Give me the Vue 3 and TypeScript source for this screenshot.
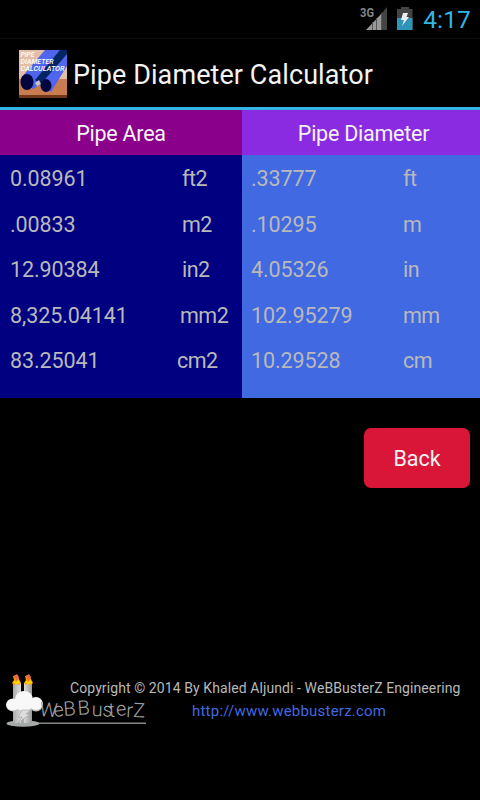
<script setup lang="ts">
interface Row {
  value: string
  unit: string
  shift?: string
}

const areas: Row[] = [
  { value: '0.08961', unit: 'ft2' },
  { value: '.00833', unit: 'm2' },
  { value: '12.90384', unit: 'in2' },
  { value: '8,325.04141', unit: 'mm2', shift: 'wide' },
  { value: '83.25041', unit: 'cm2', shift: 'wider' },
]

const diameters: Row[] = [
  { value: '.33777', unit: 'ft' },
  { value: '.10295', unit: 'm' },
  { value: '4.05326', unit: 'in' },
  { value: '102.95279', unit: 'mm' },
  { value: '10.29528', unit: 'cm' },
]

function goBack() {
  window.history.back()
}
</script>

<template>
  <div class="screen">
    <!-- status bar -->
    <div class="status-bar">
      <svg class="signal" width="28" height="26" viewBox="0 0 28 26">
        <text x="0" y="12" class="network" textLength="14" lengthAdjust="spacingAndGlyphs">3G</text>
        <path d="M22 8L27 2V25H22Z" fill="#444" />
        <path d="M6 25L22 8V25Z" fill="#999" />
        <path d="M12.500 17V25M16.500 13V25M21.500 8V25" stroke="#555" stroke-width="1" />
      </svg>
      <svg class="battery" width="16" height="24" viewBox="0 0 16 24">
        <path d="M4 0H12V2H15.500V23H0V2H4Z" fill="#444" />
        <path d="M0 11H15.500V23H0Z" fill="#2e94b8" />
        <path d="M6 6H11L9.500 10H12L5 19L7 13H4Z" fill="#eee" />
      </svg>
      <span class="clock">4:17</span>
    </div>

    <!-- title bar -->
    <header class="action-bar">
      <svg class="app-icon" width="48" height="48" viewBox="0 0 48 48">
        <rect width="48" height="48" fill="#e4bda5" />
        <path d="M0 29H48V48H0Z" fill="#c87c50" />
        <path d="M0 45H48V48H0Z" fill="#713716" />
        <path d="M26 0H48V16L32 42L22 34L14 39L2 28Z" fill="#5065ee" />
        <path d="M41 0H48V4L22 34L16 30Z" fill="#042563" />
        <path d="M16 33L20 30L22 34L18 36Z" fill="#c9c4bd" />
        <ellipse cx="8" cy="32" rx="6.500" ry="8" fill="#01053f" />
        <ellipse cx="27" cy="35.500" rx="5.500" ry="6.500" fill="#01053f" />
        <g class="icon-text">
          <text x="1.500" y="7" textLength="14" lengthAdjust="spacingAndGlyphs">PIPE</text>
          <text x="1.500" y="14" textLength="33" lengthAdjust="spacingAndGlyphs">DIAMETER</text>
          <text x="1.500" y="21" textLength="44" lengthAdjust="spacingAndGlyphs">CALCULATOR</text>
        </g>
      </svg>
      <h1 class="title">Pipe Diameter Calculator</h1>
    </header>

    <!-- results -->
    <main class="results">
      <section class="column area">
        <h2 class="heading">Pipe Area</h2>
        <div class="rows">
          <div v-for="row in areas" :key="row.unit" class="row">
            <span class="value">{{ row.value }}</span>
            <span class="unit" :class="row.shift">{{ row.unit }}</span>
          </div>
        </div>
      </section>
      <section class="column diameter">
        <h2 class="heading">Pipe Diameter</h2>
        <div class="rows">
          <div v-for="row in diameters" :key="row.unit" class="row">
            <span class="value">{{ row.value }}</span>
            <span class="unit">{{ row.unit }}</span>
          </div>
        </div>
      </section>
    </main>

    <div class="actions">
      <button class="back-button" @click="goBack">Back</button>
    </div>

    <footer class="footer">
      <svg class="brand" width="148" height="56" viewBox="0 0 148 56">
        <defs>
          <linearGradient id="wax">
            <stop offset="0" stop-color="#aaa" />
            <stop offset=".5" stop-color="#e4e4e4" />
            <stop offset="1" stop-color="#999" />
          </linearGradient>
        </defs>
        <path d="M36 51.300H146" stroke="#858585" stroke-width="1.400" />
        <ellipse cx="23" cy="51.500" rx="16.500" ry="3.300" fill="#a5a9a7" />
        <path d="M13 11H21V51H13ZM24 11H32V51H24Z" fill="url(#wax)" />
        <path d="M21 31H24V51H21Z" fill="#aaa" />
        <g v-for="x in [12, 24]" :key="x" :transform="`translate(${x} 2)`">
          <path d="M0 9L2 6L1 2L5 1L7 5L9 9L7 11L4 10L2 11Z" fill="#ff9d00" />
          <path d="M2 2L5 0L7 3L5 7L3 5Z" fill="#e66b48" />
          <path d="M1 8L3 7L4 9L6 6L8 9L4 10Z" fill="#ffe600" />
        </g>
        <!-- cloud -->
        <g fill="#bfc1c0">
          <ellipse cx="13" cy="33.500" rx="6.800" ry="6" />
          <ellipse cx="24" cy="35" rx="9" ry="5" />
          <ellipse cx="36" cy="33" rx="6.800" ry="6.500" />
        </g>
        <g fill="#f8f8f8">
          <ellipse cx="13" cy="32.500" rx="6.800" ry="6" />
          <ellipse cx="24" cy="27" rx="8.800" ry="8" />
          <ellipse cx="24" cy="33" rx="9" ry="6" />
          <ellipse cx="36" cy="31.500" rx="6.800" ry="6.500" />
        </g>
        <path d="M22 38H31L26 42H30L18 51L22 45H18Z" fill="#ddd" stroke="#999" stroke-width=".5" />
        <text
          x="39 54 64 78 91.500 102 109 116.500 126 133"
          y="44 45 44 43 44 44 45 44 45 45"
          rotate="5 -6 -5 -4 2 5 -3 -5 3 2"
          class="brand-text"
        >WeBBusterZ</text>
      </svg>
      <div class="credits">
        <p class="copyright">Copyright © 2014 By Khaled Aljundi - WeBBusterZ Engineering</p>
        <a class="link" href="http://www.webbusterz.com">http://www.webbusterz.com</a>
      </div>
    </footer>
  </div>
</template>

<style>
body {
  background: #000;
}
</style>

<style scoped>
.screen {
  width: 480px;
  height: 800px;
  display: flex;
  flex-direction: column;
  overflow: hidden;
  background: #000;
  color: #f3f3f3;
  font-family: Roboto, "Liberation Sans", sans-serif;
}
.status-bar {
  box-sizing: border-box;
  height: 39px;
  flex: none;
  display: flex;
  justify-content: flex-end;
  align-items: flex-start;
  padding: 5px 9px 0 0;
  border-bottom: 1px solid #0c0c0c;
}
.signal {
  margin-right: 9px;
}
.network {
  font-size: 13px;
  font-weight: 700;
  fill: #858585;
}
.battery {
  margin: 2px 10px 0 0;
}
.clock {
  color: #33b5e5;
  font-size: 24.5px;
  line-height: 30px;
  letter-spacing: 0.15px;
}
.action-bar {
  box-sizing: border-box;
  height: 71px;
  flex: none;
  display: flex;
  align-items: center;
  gap: 6px;
  padding-left: 19px;
  border-bottom: 3px solid #33b5e5;
}
.app-icon {
  margin-top: 2px;
}
.icon-text {
  font-size: 6.5px;
  font-weight: 500;
  font-style: italic;
  fill: #fff;
}
.title {
  margin: 4px 0 0;
  font-size: 27px;
  font-weight: 400;
  letter-spacing: 0.08px;
  white-space: nowrap;
}
.results {
  height: 288px;
  flex: none;
  display: grid;
  grid-template-columns: 242px 238px;
}
.column {
  display: flex;
  flex-direction: column;
}
.area {
  background: #000080;
}
.diameter {
  background: #4169e1;
}
.heading {
  height: 45px;
  margin: 0;
  font-size: 21.5px;
  font-weight: 400;
  line-height: 48px;
  letter-spacing: -0.25px;
  text-align: center;
}
.area .heading {
  background: #8b008b;
}
.diameter .heading {
  padding-left: 5px;
  background: #8a2be2;
}
.rows {
  padding-top: 1px;
}
.row {
  height: 45.5px;
  display: grid;
  grid-template-columns: 172px 1fr;
  padding-left: 10px;
  color: #b9b9b9;
  font-size: 21.5px;
  line-height: 46px;
  letter-spacing: -0.08px;
}
.unit {
  letter-spacing: -0.5px;
}
.diameter .row {
  grid-template-columns: 152px 1fr;
  padding-left: 9px;
}
.wide {
  margin-left: -2px;
}
.wider {
  margin-left: -5px;
}
.actions {
  display: flex;
  justify-content: flex-end;
  padding: 30px 10px 0 0;
}
.back-button {
  width: 106px;
  height: 60px;
  padding: 0;
  border: 0;
  border-radius: 7px;
  background: #d91638;
  color: #f3f3f3;
  font: 21.5px Roboto, "Liberation Sans", sans-serif;
}
.footer {
  display: grid;
  margin-top: 184px;
}
.brand,
.credits {
  grid-area: 1 / 1;
}
.brand-text {
  font-family: Roboto, sans-serif;
  font-size: 20px;
  font-weight: 300;
  fill: #a2a2a2;
}
.credits {
  padding: 7px 0 0 70px;
}
.copyright {
  margin: 0;
  color: #b9b9b9;
  font-size: 14px;
  line-height: 18px;
  letter-spacing: 0.09px;
  white-space: nowrap;
}
.link {
  display: block;
  margin: 4px 0 0 122px;
  color: #4169e1;
  font-size: 15px;
  line-height: 20px;
  letter-spacing: 0.22px;
  text-decoration: none;
}
</style>
